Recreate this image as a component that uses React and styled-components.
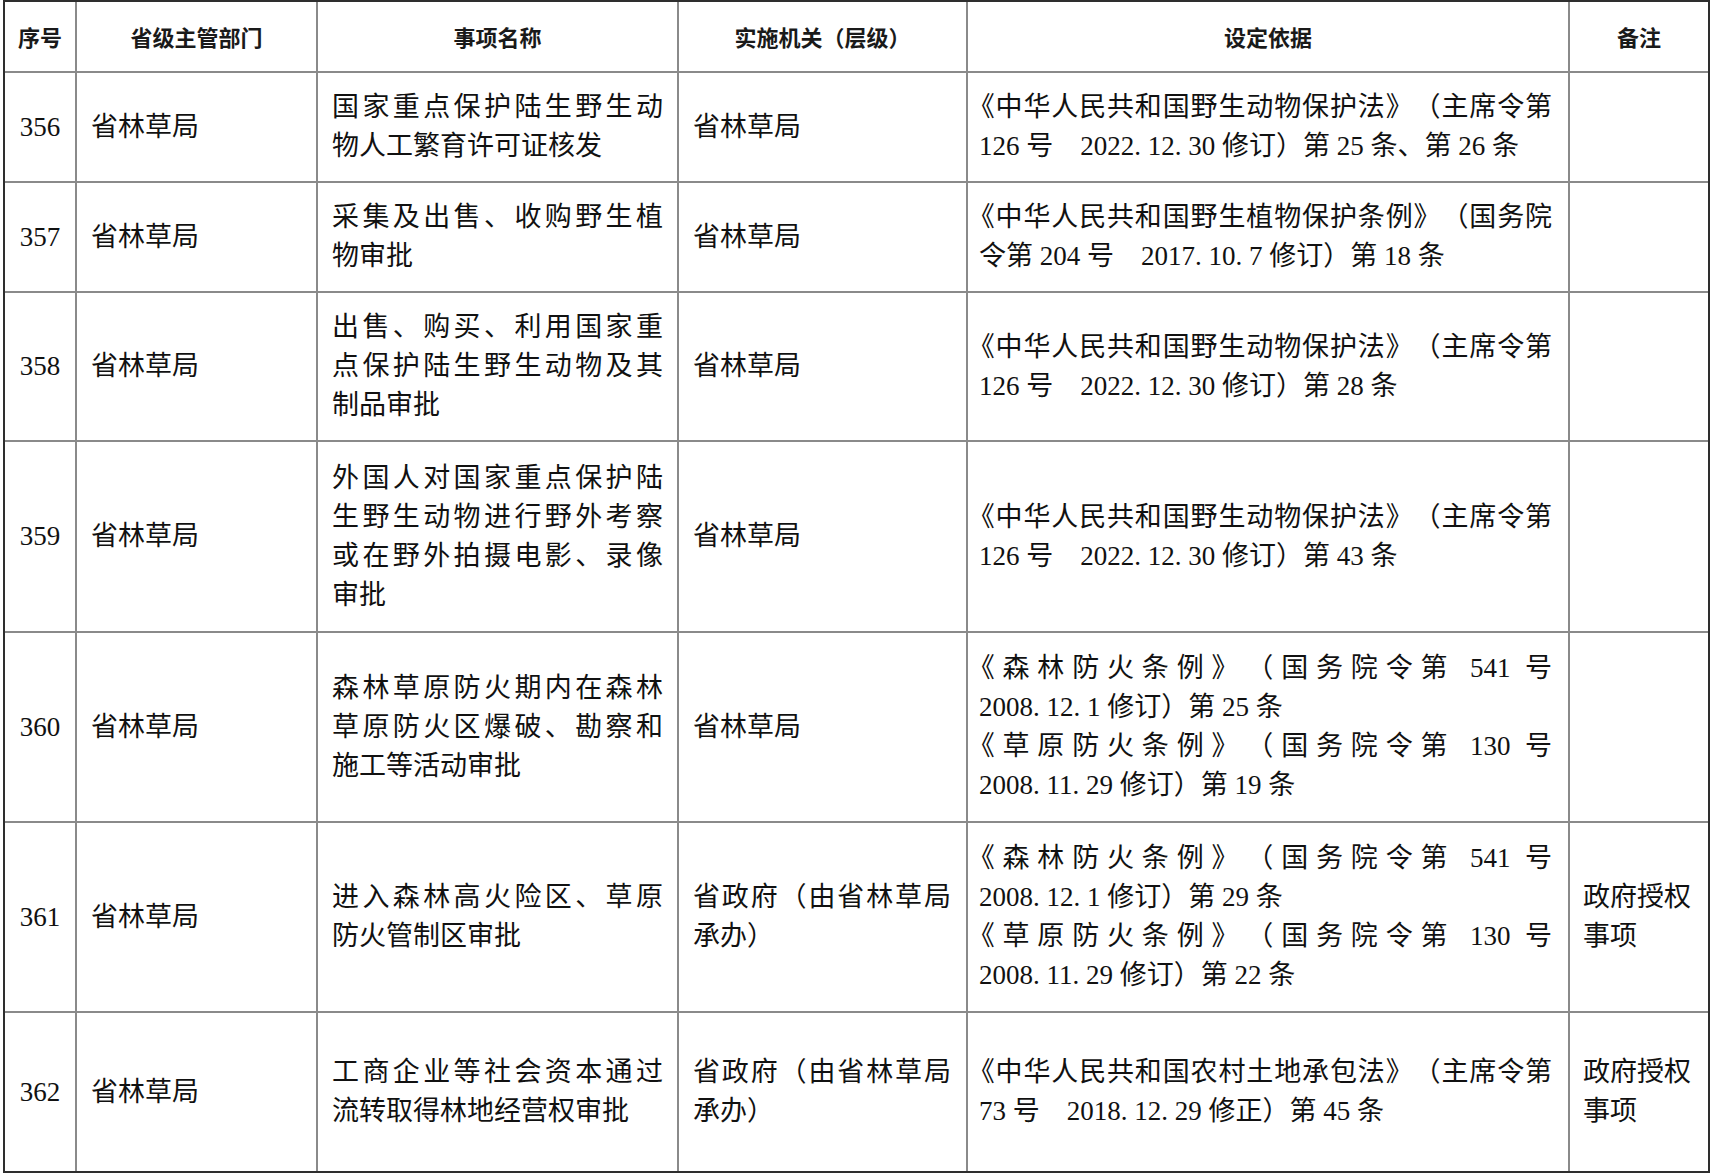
import React from "react";
import styled, { createGlobalStyle } from "styled-components";

// column widths (border-box, right border included)
const COLS = "72px 241px 361px 289px 602px 138px";

const header = ["序号", "省级主管部门", "事项名称", "实施机关（层级）", "设定依据", "备注"];

// each line: [text, justified?]
const rows = [
  {
    no: "356",
    h: 110,
    name: [["国家重点保护陆生野生动", true], ["物人工繁育许可证核发"]],
    org: [["省林草局"]],
    basis: [
      ["《中华人民共和国野生动物保护法》（主席令第", true],
      ["126 号\u30002022. 12. 30 修订）第 25 条、第 26 条"],
    ],
    note: [],
  },
  {
    no: "357",
    h: 110,
    name: [["采集及出售、收购野生植", true], ["物审批"]],
    org: [["省林草局"]],
    basis: [
      ["《中华人民共和国野生植物保护条例》（国务院", true],
      ["令第 204 号\u30002017. 10. 7 修订）第 18 条"],
    ],
    note: [],
  },
  {
    no: "358",
    h: 149,
    name: [["出售、购买、利用国家重", true], ["点保护陆生野生动物及其", true], ["制品审批"]],
    org: [["省林草局"]],
    basis: [
      ["《中华人民共和国野生动物保护法》（主席令第", true],
      ["126 号\u30002022. 12. 30 修订）第 28 条"],
    ],
    note: [],
  },
  {
    no: "359",
    h: 191,
    name: [
      ["外国人对国家重点保护陆", true],
      ["生野生动物进行野外考察", true],
      ["或在野外拍摄电影、录像", true],
      ["审批"],
    ],
    org: [["省林草局"]],
    basis: [
      ["《中华人民共和国野生动物保护法》（主席令第", true],
      ["126 号\u30002022. 12. 30 修订）第 43 条"],
    ],
    note: [],
  },
  {
    no: "360",
    h: 190,
    name: [["森林草原防火期内在森林", true], ["草原防火区爆破、勘察和", true], ["施工等活动审批"]],
    org: [["省林草局"]],
    basis: [
      ["《森林防火条例》（国务院令第 541 号", true],
      ["2008. 12. 1 修订）第 25 条"],
      ["《草原防火条例》（国务院令第 130 号", true],
      ["2008. 11. 29 修订）第 19 条"],
    ],
    note: [],
  },
  {
    no: "361",
    h: 190,
    name: [["进入森林高火险区、草原", true], ["防火管制区审批"]],
    org: [["省政府（由省林草局", true], ["承办）"]],
    basis: [
      ["《森林防火条例》（国务院令第 541 号", true],
      ["2008. 12. 1 修订）第 29 条"],
      ["《草原防火条例》（国务院令第 130 号", true],
      ["2008. 11. 29 修订）第 22 条"],
    ],
    note: [["政府授权"], ["事项"]],
  },
  {
    no: "362",
    h: 158,
    name: [["工商企业等社会资本通过", true], ["流转取得林地经营权审批"]],
    org: [["省政府（由省林草局", true], ["承办）"]],
    basis: [
      ["《中华人民共和国农村土地承包法》（主席令第", true],
      ["73 号\u30002018. 12. 29 修正）第 45 条"],
    ],
    note: [["政府授权"], ["事项"]],
  },
];

export default function App() {
  return (
    <>
      <GlobalStyle />
      <Table lang="zh-CN">
        <Row $h={71}>
          {header.map((t) => (
            <HeadCell key={t}>{t}</HeadCell>
          ))}
        </Row>
        {rows.map((r) => (
          <Row key={r.no} $h={r.h}>
            <NumCell>{r.no}</NumCell>
            <Cell $pl={14} $pr={14}>
              <Lines lines={[["省林草局"]]} />
            </Cell>
            <Cell $pl={14} $pr={14}>
              <Lines lines={r.name} />
            </Cell>
            <Cell $pl={14} $pr={15}>
              <Lines lines={r.org} />
            </Cell>
            <Cell $pl={11} $pr={16}>
              <Lines lines={r.basis} />
            </Cell>
            <Cell $pl={13} $pr={6}>
              <Lines lines={r.note} />
            </Cell>
          </Row>
        ))}
      </Table>
    </>
  );
}

function Lines({ lines }) {
  return lines.map(([text, justify], i) => (
    <Line key={i} $justify={!!justify} $hang={text.startsWith("《")}>
      {text}
    </Line>
  ));
}

// Styles
const GlobalStyle = createGlobalStyle`
  html, body {
    margin: 0;
    padding: 0;
    background: #fff;
  }
  body {
    font-family: "Liberation Serif", "Noto Sans CJK SC", serif;
    color: #111;
  }
`;

const Table = styled.div`
  margin-left: 3px;
  width: max-content;
  border: 2px solid #2e2e2e;
  background: #fff;
`;

const Row = styled.div`
  display: grid;
  grid-template-columns: ${COLS};
  height: ${(p) => p.$h}px;
  box-sizing: border-box;
  border-bottom: 2px solid #8a8a8a;

  &:last-child {
    border-bottom: none;
  }
`;

const Cell = styled.div`
  box-sizing: border-box;
  display: flex;
  flex-direction: column;
  justify-content: center;
  padding: 0 ${(p) => p.$pr}px 0 ${(p) => p.$pl}px;
  border-right: 2px solid #8a8a8a;
  font-size: 27px;
  line-height: 39px;
  min-width: 0;

  &:last-child {
    border-right: none;
  }
`;

const HeadCell = styled(Cell)`
  align-items: center;
  font-family: "Noto Sans CJK SC", sans-serif;
  font-weight: 700;
  font-size: 22px;
  color: #1a1a1a;
  padding: 0;
`;

const NumCell = styled(Cell)`
  align-items: center;
  padding: 0;
`;

const Line = styled.div`
  text-spacing-trim: space-all;
  text-align: ${(p) => (p.$justify ? "justify" : "left")};
  text-align-last: ${(p) => (p.$justify ? "justify" : "auto")};
  text-justify: inter-character;
  margin-left: ${(p) => (p.$hang ? "-0.42em" : "0")};
`;
